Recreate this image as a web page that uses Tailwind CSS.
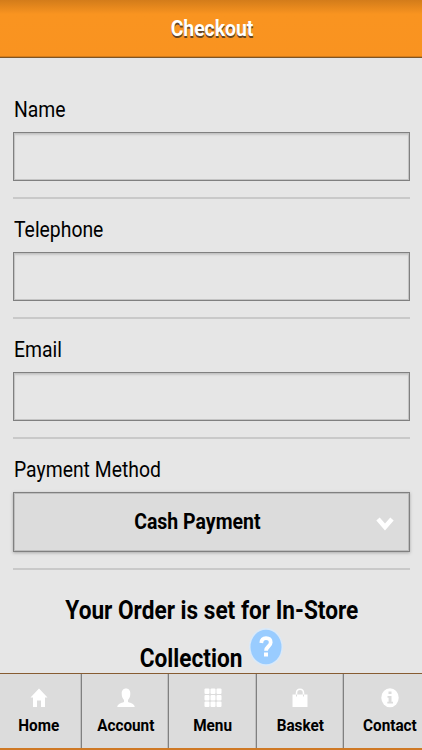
<!DOCTYPE html>
<html lang="en">
<head>
<meta charset="utf-8">
<title>Checkout</title>
<script src="https://cdn.jsdelivr.net/npm/@tailwindcss/browser@4"></script>
</head>
<body class="h-[750px] w-[422px] overflow-hidden bg-[#e6e6e6] font-[Roboto,sans-serif] text-black">
<div class="flex h-[750px] flex-col">
  <header class="flex h-[58px] shrink-0 items-center justify-center border-b border-[#7d5526] bg-linear-to-b from-[#d37c1a] via-[#f99420] via-25% to-[#f99320] pl-[2px] shadow-[inset_0_-1px_0_#d57c1a]">
    <h1 class="origin-center scale-x-[.88] text-[22px] leading-[54px] font-bold text-white [text-shadow:0_2px_0_#654524]">Checkout</h1>
  </header>
  <main class="flex h-[615px] shrink-0 flex-col overflow-hidden pt-[38px] pr-[12px] pl-[13px]">
    <label class="flex h-[120px] shrink-0 flex-col">
      <span class="ml-[0.5px] h-[36px] w-max origin-left scale-x-[.88] text-[22px] leading-[28px]">Name</span>
      <span class="mb-[16px] h-[49px] border border-[#808080] shadow-[inset_0_0_0_1px_#c4c4c4,inset_0_2px_2px_#c8c8c8]"></span>
      <span class="h-[2px] bg-[#c9c9c9]"></span>
    </label>
    <label class="flex h-[120px] shrink-0 flex-col">
      <span class="ml-[0.5px] h-[36px] w-max origin-left scale-x-[.88] text-[22px] leading-[28px]">Telephone</span>
      <span class="mb-[16px] h-[49px] border border-[#808080] shadow-[inset_0_0_0_1px_#c4c4c4,inset_0_2px_2px_#c8c8c8]"></span>
      <span class="h-[2px] bg-[#c9c9c9]"></span>
    </label>
    <label class="flex h-[120px] shrink-0 flex-col">
      <span class="ml-[0.5px] h-[36px] w-max origin-left scale-x-[.88] text-[22px] leading-[28px]">Email</span>
      <span class="mb-[16px] h-[49px] border border-[#808080] shadow-[inset_0_0_0_1px_#c4c4c4,inset_0_2px_2px_#c8c8c8]"></span>
      <span class="h-[2px] bg-[#c9c9c9]"></span>
    </label>
    <div class="flex shrink-0 flex-col">
      <span class="ml-[0.5px] h-[36px] w-max origin-left scale-x-[.88] text-[22px] leading-[28px]">Payment Method</span>
      <button class="mb-[16px] flex h-[60px] items-center border border-[#808080] bg-[#dcdcdc] pr-[14px] pl-[5px] shadow-[inset_0_0_0_1px_#bdbdbd,0_1px_3px_#aaa]">
        <span class="flex-1 pb-[2px] text-center"><span class="inline-block scale-x-[.885] text-[22px] font-bold">Cash Payment</span></span>
        <svg class="mt-[3px] h-[14px] w-[20px]" viewBox="0 0 20 14" fill="none" stroke="#fff" stroke-width="4.500"><path d="M3 2l7 8 7-8"/></svg>
      </button>
      <span class="h-[2px] bg-[#c9c9c9]"></span>
    </div>
    <h2 class="flex flex-col items-center pt-[17px] text-[25px] leading-[48px] font-bold">
      <span class="scale-x-[.905] whitespace-nowrap">Your Order is set for In-Store</span>
      <span class="flex h-[48px] items-start pr-[2px]">
        <span class="origin-right scale-x-[.905]">Collection</span>
        <svg class="mt-[-7px] mr-[9px] ml-[7px] h-[38px] w-[34px]" viewBox="0 0 34 38"><ellipse cx="17" cy="19" rx="17" ry="19" fill="#dae9f8"/><ellipse cx="17" cy="19" rx="15.500" ry="17.300" fill="#99ccff"/><path d="M12.300 15c.2-3 1.700-4.800 4.700-4.800 3 0 4.700 1.600 4.700 4.200 0 4-4.700 4.200-4.700 8.300" fill="none" stroke="#fff" stroke-width="3.800"/><path d="M15 24.500h4v4h-4z" fill="#fff"/></svg>
      </span>
    </h2>
  </main>
  <nav class="grid h-[77px] shrink-0 grid-cols-[82px_87px_88px_87px_91px] border-t-[1.5px] border-b-2 border-t-[#875c32] border-b-[#cf7925] bg-[#dcdcdc] text-[17px] leading-[20px] font-bold">
    <a class="flex flex-col items-center border-r border-[#808080] pt-[14px] pr-[4px] shadow-[inset_-1px_0_0_#c0c0c0]">
      <svg class="mb-[7px] h-[20px] w-[18px]" viewBox="0 0 18 20" fill="#fff"><path d="M9 .5L17.500 9.500H15V19H11V12.500H7V19H3V9.500H.500z"/></svg>
      <span class="scale-x-[.90]">Home</span>
    </a>
    <a class="flex flex-col items-center border-r border-[#808080] pt-[14px] pl-[1px] shadow-[inset_-1px_0_0_#c0c0c0]">
      <svg class="mb-[7px] h-[20px] w-[18px]" viewBox="0 0 18 20" fill="#fff"><path d="M9 .5c3 0 4.300 2.200 4.300 5.200 0 2.800-1 5-2.300 6.200v2c3 1 6.700 2 6.700 5.100H.300c0-3.100 3.700-4.100 6.700-5.100v-2C5.700 10.700 4.700 8.500 4.700 5.700 4.700 2.700 6 .5 9 .5z"/></svg>
      <span class="scale-x-[.90]">Account</span>
    </a>
    <a class="flex flex-col items-center border-r border-[#808080] pt-[14px] shadow-[inset_-1px_0_0_#c0c0c0]">
      <svg class="mb-[7px] h-[20px] w-[18px]" viewBox="0 0 18 20" fill="#fff"><rect x=".5" y=".5" width="5" height="5.500" rx="1"/><rect x="6.500" y=".5" width="5" height="5.500" rx="1"/><rect x="12.500" y=".5" width="5" height="5.500" rx="1"/><rect x=".5" y="7" width="5" height="5.500" rx="1"/><rect x="6.500" y="7" width="5" height="5.500" rx="1"/><rect x="12.500" y="7" width="5" height="5.500" rx="1"/><rect x=".5" y="13.500" width="5" height="5.500" rx="1"/><rect x="6.500" y="13.500" width="5" height="5.500" rx="1"/><rect x="12.500" y="13.500" width="5" height="5.500" rx="1"/></svg>
      <span class="scale-x-[.90]">Menu</span>
    </a>
    <a class="flex flex-col items-center border-r border-[#808080] pt-[14px] shadow-[inset_-1px_0_0_#c0c0c0]">
      <svg class="mb-[7px] h-[20px] w-[18px]" viewBox="0 0 18 20"><path d="M1.500 6.500h15V19h-15z" fill="#fff"/><path d="M5.500 8.500V5c0-5 7-5 7 0v3.500" fill="none" stroke="#fff" stroke-width="1.500"/><path d="M5.500 6.500v2M12.500 6.500v2" stroke="#dcdcdc"/></svg>
      <span class="scale-x-[.90]">Basket</span>
    </a>
    <a class="flex flex-col items-center pt-[14px]">
      <svg class="mb-[7px] h-[20px] w-[18px]" viewBox="0 0 18 20"><ellipse cx="9" cy="9.800" rx="8.700" ry="9.500" fill="#fff"/><path d="M7.500 3.500h3V6h-3zM6.500 8h4v5.800H12V15.500H6.300v-1.700h1.300V9.700H6.500z" fill="#dcdcdc"/></svg>
      <span class="scale-x-[.90]">Contact</span>
    </a>
  </nav>
</div>
</body>
</html>
